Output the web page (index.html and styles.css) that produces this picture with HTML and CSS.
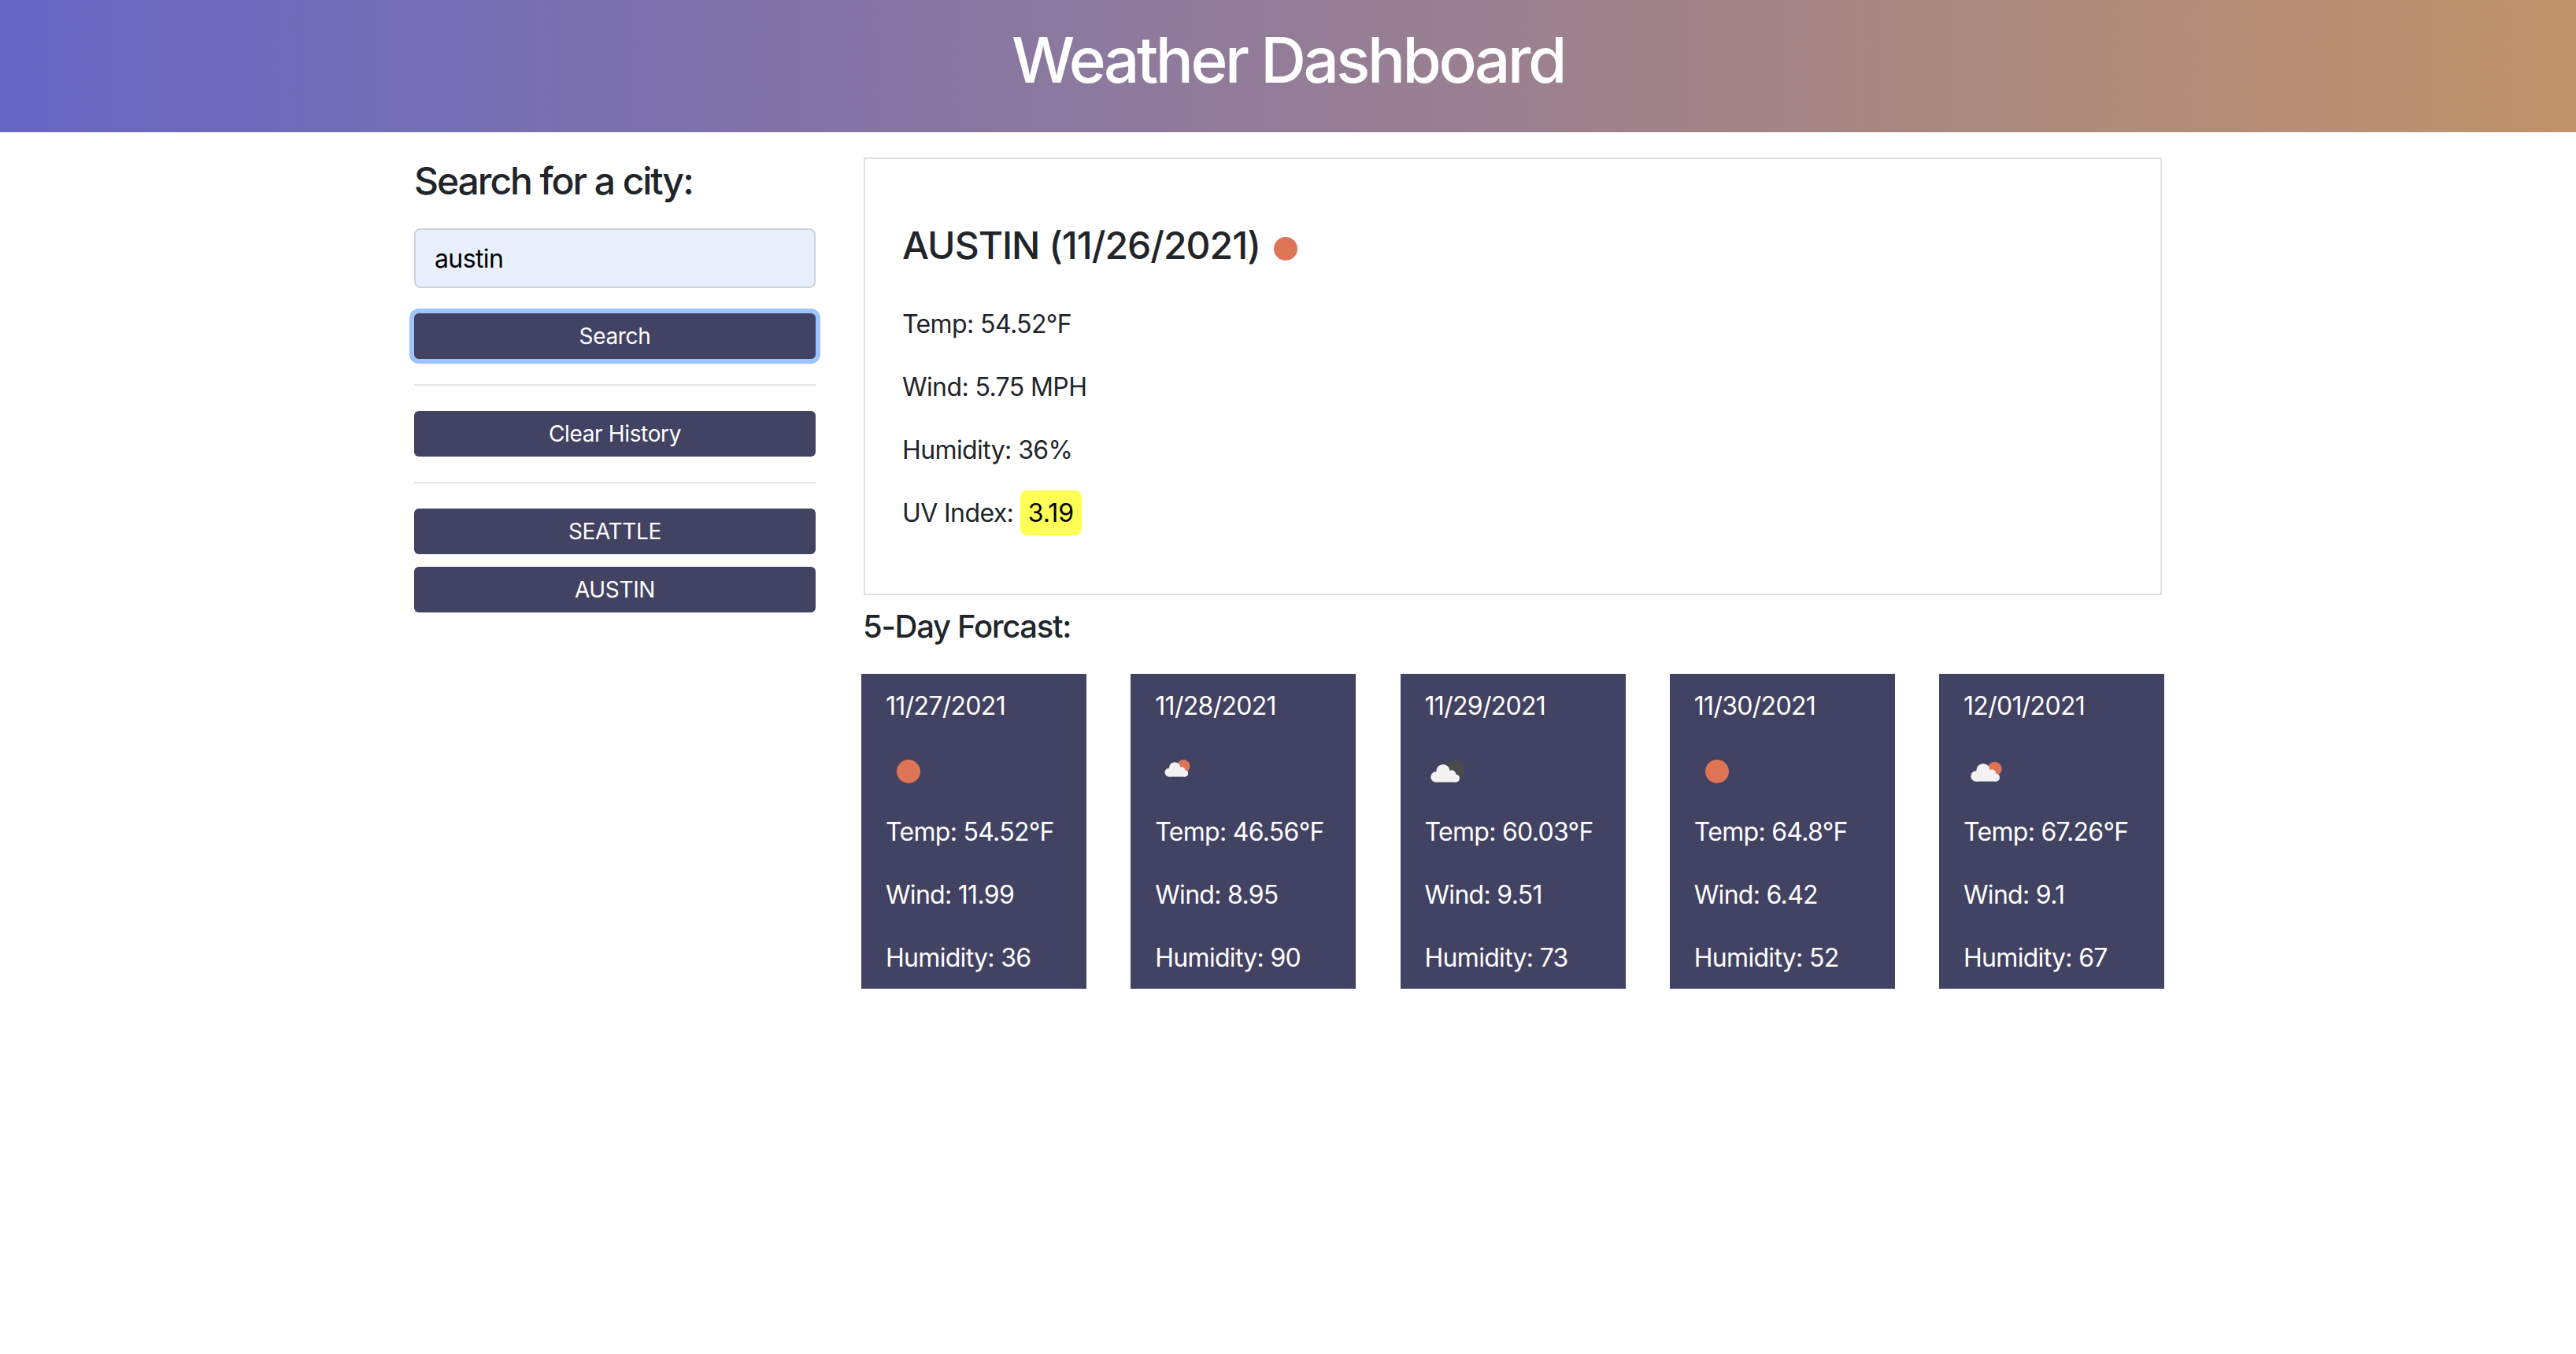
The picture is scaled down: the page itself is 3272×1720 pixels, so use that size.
FILE: index.html
```html
<!DOCTYPE html>
<html lang="en">
<head>
	<meta charset="UTF-8">
	<title>Weather Dashboard</title>
	<link rel="stylesheet" href="styles.css">
</head>

<body>
	<header class="top-bar">
		<h1>Weather Dashboard</h1>
	</header>
	<div class="page">
		<aside class="sidebar">
			<h2 class="side-title">Search for a city:</h2>
			<input class="city-input" type="text" value="austin">
			<button class="btn btn-focus">Search</button>
			<hr class="rule">
			<button class="btn">Clear History</button>
			<hr class="rule">
			<div class="history">
				<button class="btn">SEATTLE</button>
				<button class="btn">AUSTIN</button>
			</div>
		</aside>
		<main class="content">
			<section class="today">
				<h2 class="today-title">AUSTIN (11/26/2021) <svg class="today-icon" width="30" height="30" viewBox="0 0 30 30"><circle cx="15" cy="15" r="15" fill="#dd7455"/></svg></h2>
				<p>Temp: 54.52°F</p>
				<p>Wind: 5.75 MPH</p>
				<p>Humidity: 36%</p>
				<p class="uv-row">UV Index: <span class="uv">3.19</span></p>
			</section>
			<h3 class="forecast-title">5-Day Forcast:</h3>
			<div class="forecast">
				<div class="day">
					<p>11/27/2021</p>
					<svg class="day-icon" viewBox="0 0 60 54"><circle cx="29" cy="27" r="15" fill="#dd7455"/></svg>
					<p>Temp: 54.52°F</p>
					<p>Wind: 11.99</p>
					<p>Humidity: 36</p>
				</div>
				<div class="day">
					<p>11/28/2021</p>
					<svg class="day-icon" viewBox="0 0 60 54">
						<circle cx="36.300" cy="20.300" r="8.300" fill="#dd7455"/>
						<g transform="translate(13 15.300) scale(.27)" fill="#f2f2f2">
							<circle cx="18" cy="48" r="20"/><circle cx="45" cy="26" r="26"/><circle cx="78" cy="38" r="16"/><circle cx="93" cy="53" r="15"/><rect x="18" y="40" width="75" height="28"/>
						</g>
						<path d="M23 34v6M27 37v4M31 36v4" stroke="#3c3c50" stroke-width="1" stroke-dasharray="2 1" fill="none"/>
					</svg>
					<p>Temp: 46.56°F</p>
					<p>Wind: 8.95</p>
					<p>Humidity: 90</p>
				</div>
				<div class="day">
					<p>11/29/2021</p>
					<svg class="day-icon" viewBox="0 0 60 54">
						<circle cx="37.700" cy="25.300" r="11.800" fill="#4a4a4a"/>
						<g transform="translate(8 18) scale(.333)" fill="#f2f2f2">
							<circle cx="18" cy="48" r="20"/><circle cx="45" cy="26" r="26"/><circle cx="78" cy="38" r="16"/><circle cx="93" cy="53" r="15"/><rect x="18" y="40" width="75" height="28"/>
						</g>
					</svg>
					<p>Temp: 60.03°F</p>
					<p>Wind: 9.51</p>
					<p>Humidity: 73</p>
				</div>
				<div class="day">
					<p>11/30/2021</p>
					<svg class="day-icon" viewBox="0 0 60 54"><circle cx="29" cy="27" r="15" fill="#dd7455"/></svg>
					<p>Temp: 64.8°F</p>
					<p>Wind: 6.42</p>
					<p>Humidity: 52</p>
				</div>
				<div class="day">
					<p>12/01/2021</p>
					<svg class="day-icon" viewBox="0 0 60 54">
						<circle cx="39.700" cy="23.700" r="9" fill="#dd7455"/>
						<g transform="translate(10 17) scale(.333)" fill="#f2f2f2">
							<circle cx="18" cy="48" r="20"/><circle cx="45" cy="26" r="26"/><circle cx="78" cy="38" r="16"/><circle cx="93" cy="53" r="15"/><rect x="18" y="40" width="75" height="28"/>
						</g>
					</svg>
					<p>Temp: 67.26°F</p>
					<p>Wind: 9.1</p>
					<p>Humidity: 67</p>
				</div>
			</div>
		</main>
	</div>
</body>
</html>
```

FILE: styles.css
```css
* {margin: 0;padding: 0;box-sizing: border-box;}
body {background: #fff;color: #212529;font-family: Inter, "Liberation Sans", sans-serif;font-size: 32px;line-height: 48px;letter-spacing: -.6px;}

.top-bar {height: 168px;padding-bottom: 16px;display: flex;align-items: center;justify-content: center;background: linear-gradient(90deg, #6666c4, #c0936a);}
.top-bar h1 {font-size: 80px;font-weight: 500;line-height: 96px;letter-spacing: -3.5px;color: #fff;}

.page {width: 2220px;margin: 0 auto;padding-top: 32px;display: flex;gap: 61px;}

.sidebar {width: 510px;flex: none;}
.side-title {font-size: 48px;font-weight: 500;line-height: 58px;letter-spacing: -2.050px;margin-top: 1px;margin-bottom: 31px;}
.city-input {display: block;width: 100%;height: 76px;padding: 0 24px;border: 2px solid #ced4da;border-radius: 8px;background: #e8f0fe;font: inherit;letter-spacing: -.6px;color: #000;margin-bottom: 32px;}
.btn {display: block;width: 100%;height: 58px;border: none;border-radius: 6px;background: #424263;color: #fff;font-family: inherit;font-size: 28px;letter-spacing: -.35px;}
.btn-focus {box-shadow: 0 0 0 6px #9dc4fb;}
.rule {border: none;height: 2px;background: #e5e5e5;margin: 32px 0;}
.history {display: flex;flex-direction: column;gap: 16px;}

.content {flex: 1;min-width: 0;}
.today {height: 556px;border: 2px solid #dee2e6;padding: 81px 48px 48px 47px;}
.today-title {font-size: 48px;font-weight: 500;line-height: 58px;letter-spacing: -1px;margin-bottom: 47px;}
.today-icon {margin-left: 5px;vertical-align: -2px;}
.today p {margin-bottom: 32px;}
.uv {display: inline-block;padding: 5px 10px 4px;border-radius: 8px;background: #ffff55;color: #000;letter-spacing: 0;}
.uv-row {margin-top: -5px;}

.forecast-title {font-size: 40px;font-weight: 500;line-height: 48px;letter-spacing: -1.300px;margin-top: 16px;margin-bottom: 36px;margin-left: -1px;}
.forecast {display: flex;justify-content: space-between;margin: 0 -3px;}
.day {width: 286px;height: 400px;padding: 17px 31px 0;background: #424263;color: #fff;overflow: hidden;letter-spacing: -.7px;}
.day p {margin-bottom: 32px;}
.day-icon {display: block;width: 60px;height: 54px;margin-bottom: 26px;}
```
